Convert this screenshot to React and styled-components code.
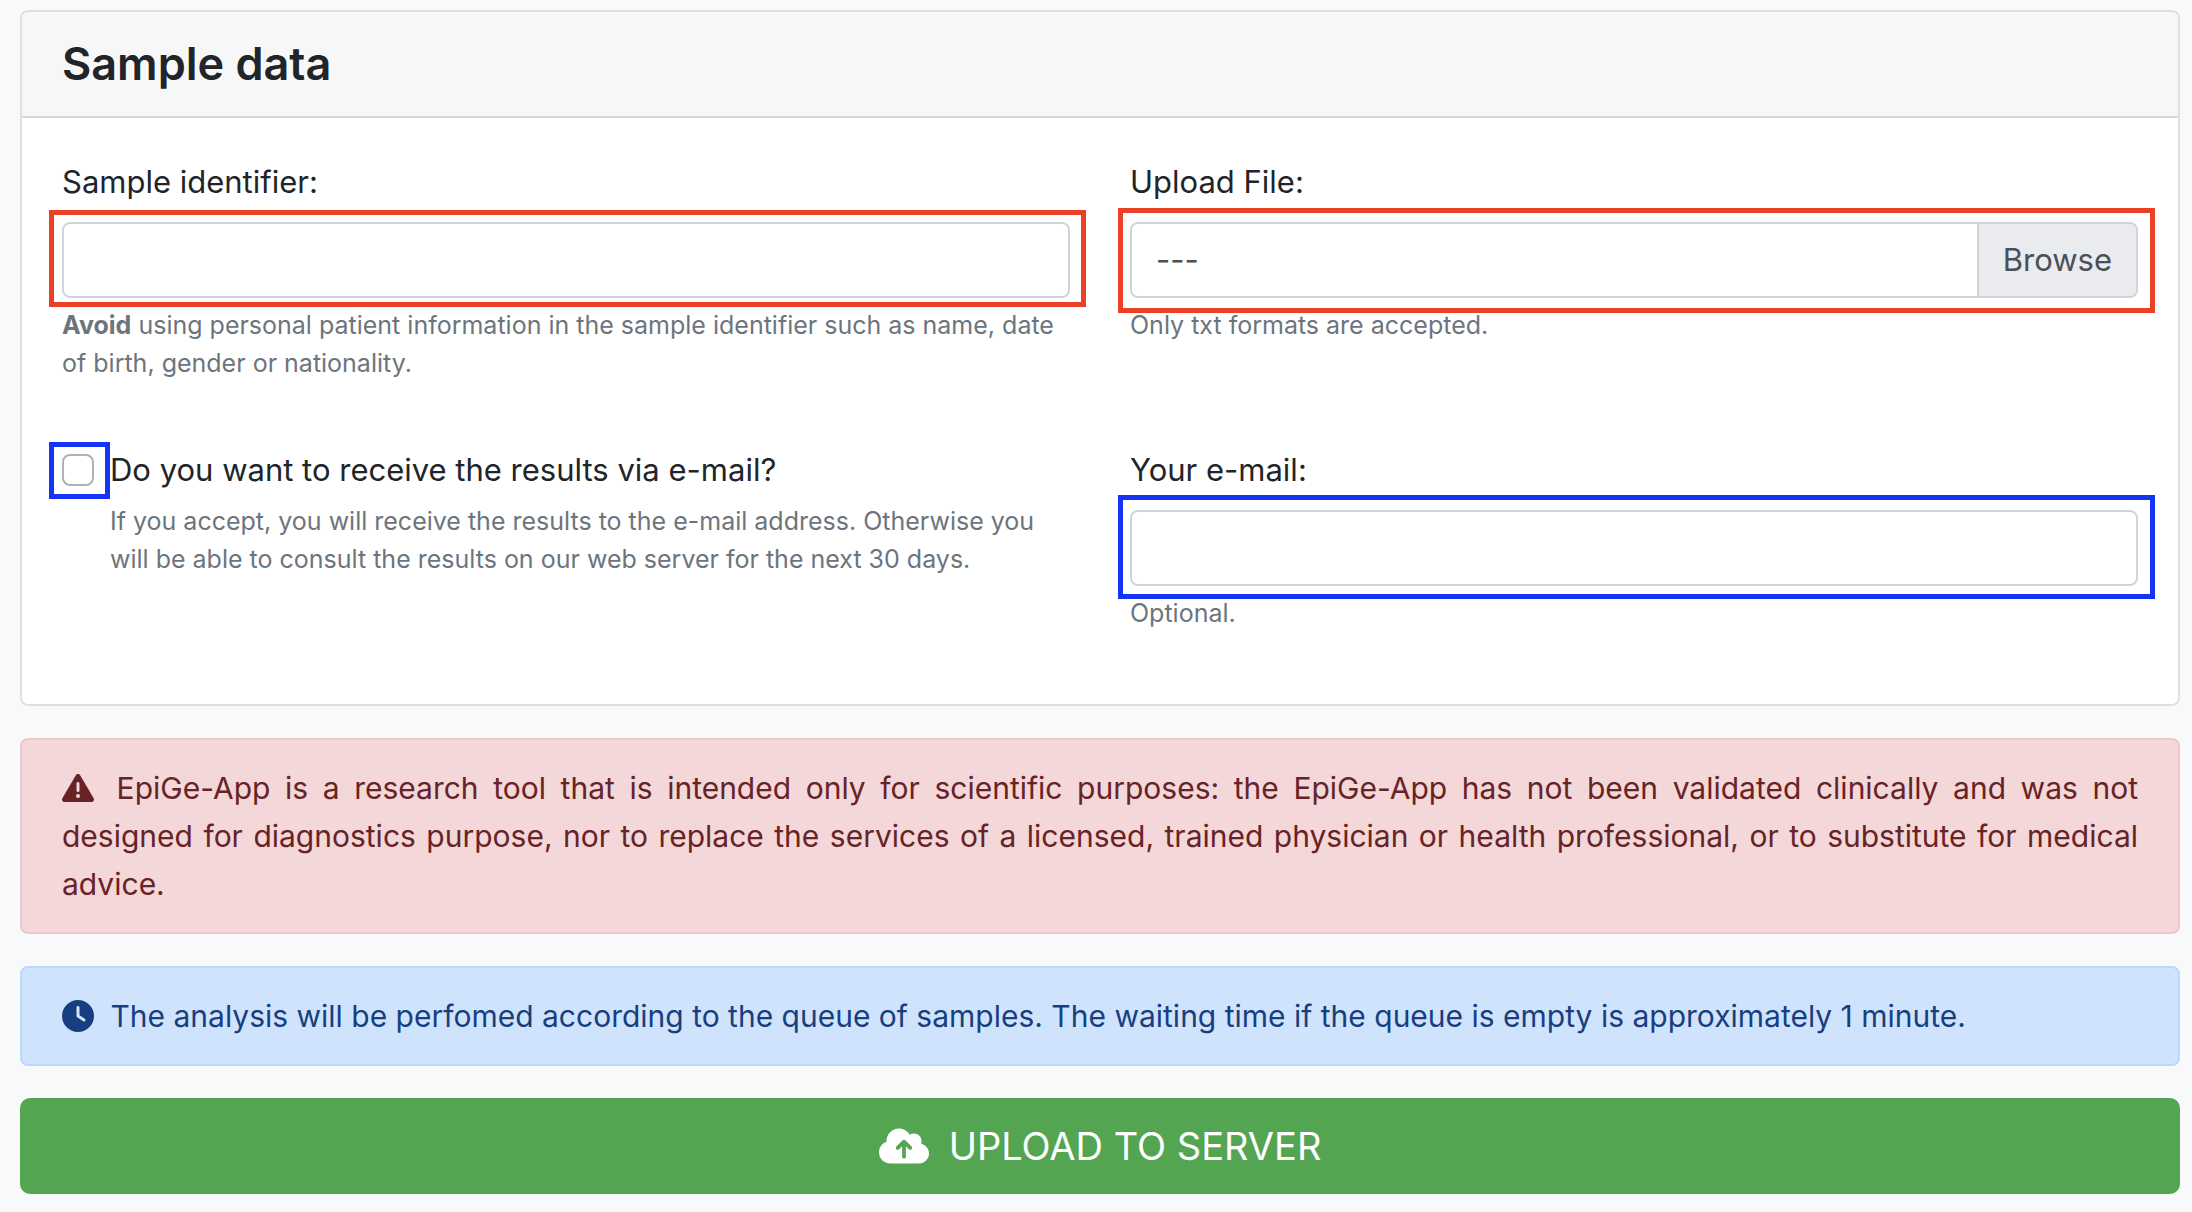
import React, { useRef, useState } from "react";
import styled, { createGlobalStyle } from "styled-components";
import { FaClock, FaCloudArrowUp, FaTriangleExclamation } from "react-icons/fa6";

const GlobalStyle = createGlobalStyle`
  * {
    box-sizing: border-box;
  }
  body {
    margin: 0;
    background: #f8f9fb;
    color: #212529;
    font-family: Inter, "Liberation Sans", sans-serif;
    font-size: 31px;
    line-height: 48px;
  }
`;

const Page = styled.form`
  display: flex;
  flex-direction: column;
  gap: 32px;
  padding: 10px 12px 18px 20px;
`;

const Card = styled.section`
  border: 2px solid #dfdfdf;
  border-radius: 8px;
  background: #fff;
  overflow: hidden;
`;

const CardHeader = styled.header`
  padding: 24px 40px;
  border-bottom: 2px solid #d6d6d6;
  background: #f7f7f7;
`;

const Title = styled.h1`
  margin: 0;
  font-size: 45px;
  font-weight: 600;
  line-height: 56px;
`;

const Fields = styled.div`
  display: grid;
  grid-template-columns: 1fr 1fr;
  gap: 64px 60px;
  padding: 40px 40px 72px;
`;

const Field = styled.div`
  display: flex;
  flex-direction: column;
`;

const Label = styled.label`
  margin-bottom: 16px;
`;

const Help = styled.small`
  margin-top: 8px;
  color: #6c757d;
  font-size: 25px;
  line-height: 38px;
`;

// frame drawn over the page around a control
const Marked = styled.div`
  position: relative;
  display: flex;

  &::after {
    content: "";
    position: absolute;
    inset: ${(props) => props.$inset};
    border: 5px solid ${(props) => (props.$optional ? "#1433f5" : "#ea4025")};
    pointer-events: none;
  }
`;

const TextInput = styled.input`
  width: 100%;
  height: 76px;
  padding: 12px 24px;
  border: 2px solid #ced4da;
  border-radius: 8px;
  background: #fff;
  color: #495057;
  font: inherit;
`;

const FileBox = styled.div`
  display: flex;
  width: 100%;
  height: 76px;
  border: 2px solid #ced4da;
  border-radius: 8px;
  color: #495057;
  overflow: hidden;
`;

const FileName = styled.span`
  flex: 1;
  padding: 12px 24px;
`;

const HiddenFile = styled.input`
  position: absolute;
  width: 1px;
  height: 1px;
  opacity: 0;
`;

const Browse = styled.button`
  padding: 0 24px;
  border: 0;
  border-left: 2px solid #ced4da;
  background: #e9ebef;
  color: inherit;
  font: inherit;
`;

const CheckField = styled.div`
  display: grid;
  grid-template-columns: 32px 1fr;
  column-gap: 16px;
  align-items: center;
  align-content: start;
`;

const Checkbox = styled.input`
  appearance: none;
  width: 32px;
  height: 32px;
  margin: 0;
  border: 2px solid #adb1bc;
  border-radius: 8px;
  background: #fff;

  &:checked {
    background: #0d6efd;
  }
`;

const CheckHelp = styled(Help)`
  grid-column: 2;
`;

const Alert = styled.div`
  padding: 24px 40px;
  border: 2px solid ${(props) => (props.$danger ? "#f0c6ca" : "#bcd7fc")};
  border-radius: 8px;
  background: ${(props) => (props.$danger ? "#f3d7d9" : "#d0e3fd")};
  color: ${(props) => (props.$danger ? "#672326" : "#173f80")};
  font-size: 30px;
  text-align: justify;

  svg {
    width: 32px;
    height: 32px;
    margin-right: 8px;
    vertical-align: -5px;
  }
`;

const Upload = styled.button`
  display: flex;
  align-items: center;
  justify-content: center;
  gap: 20px;
  padding: 18px 24px;
  border: 0;
  border-radius: 10px;
  background: #54a551;
  color: #fff;
  font: inherit;
  font-size: 38px;
  line-height: 60px;

  svg {
    width: 50px;
    height: 40px;
  }
`;

export default function App() {
  const fileRef = useRef(null);
  const [fileName, setFileName] = useState("---");

  return (
    <>
      <GlobalStyle />
      <Page onSubmit={(e) => e.preventDefault()}>
        <Card>
          <CardHeader>
            <Title>Sample data</Title>
          </CardHeader>
          <Fields>
            <Field>
              <Label htmlFor="identifier">Sample identifier:</Label>
              <Marked $inset="-12px -16px -9px -13px">
                <TextInput id="identifier" type="text" />
              </Marked>
              <Help>
                <b>Avoid</b> using personal patient information in the sample
                identifier such as name, date of birth, gender or nationality.
              </Help>
            </Field>

            <Field>
              <Label htmlFor="file">Upload File:</Label>
              <Marked $inset="-14px -17px -15px -12px">
                <FileBox>
                  <HiddenFile
                    id="file"
                    ref={fileRef}
                    type="file"
                    accept=".txt"
                    tabIndex={-1}
                    onChange={(e) =>
                      setFileName(e.target.files[0]?.name || "---")
                    }
                  />
                  <FileName>{fileName}</FileName>
                  <Browse type="button" onClick={() => fileRef.current.click()}>
                    Browse
                  </Browse>
                </FileBox>
              </Marked>
              <Help>Only txt formats are accepted.</Help>
            </Field>

            <CheckField>
              <Marked $optional $inset="-12px -16px -13px -13px">
                <Checkbox id="notify" type="checkbox" />
              </Marked>
              <label htmlFor="notify">
                Do you want to receive the results via e-mail?
              </label>
              <CheckHelp>
                If you accept, you will receive the results to the e-mail
                address. Otherwise you will be able to consult the results on
                our web server for the next 30 days.
              </CheckHelp>
            </CheckField>

            <Field>
              <Label htmlFor="email">Your e-mail:</Label>
              <Marked $optional $inset="-15px -17px -13px -12px">
                <TextInput id="email" type="email" />
              </Marked>
              <Help>Optional.</Help>
            </Field>
          </Fields>
        </Card>

        <Alert $danger>
          <FaTriangleExclamation /> EpiGe-App is a research tool that is
          intended only for scientific purposes: the EpiGe-App has not been
          validated clinically and was not designed for diagnostics purpose, nor
          to replace the services of a licensed, trained physician or health
          professional, or to substitute for medical advice.
        </Alert>

        <Alert>
          <FaClock /> The analysis will be perfomed according to the queue of
          samples. The waiting time if the queue is empty is approximately 1
          minute.
        </Alert>

        <Upload type="submit">
          <FaCloudArrowUp /> UPLOAD TO SERVER
        </Upload>
      </Page>
    </>
  );
}
